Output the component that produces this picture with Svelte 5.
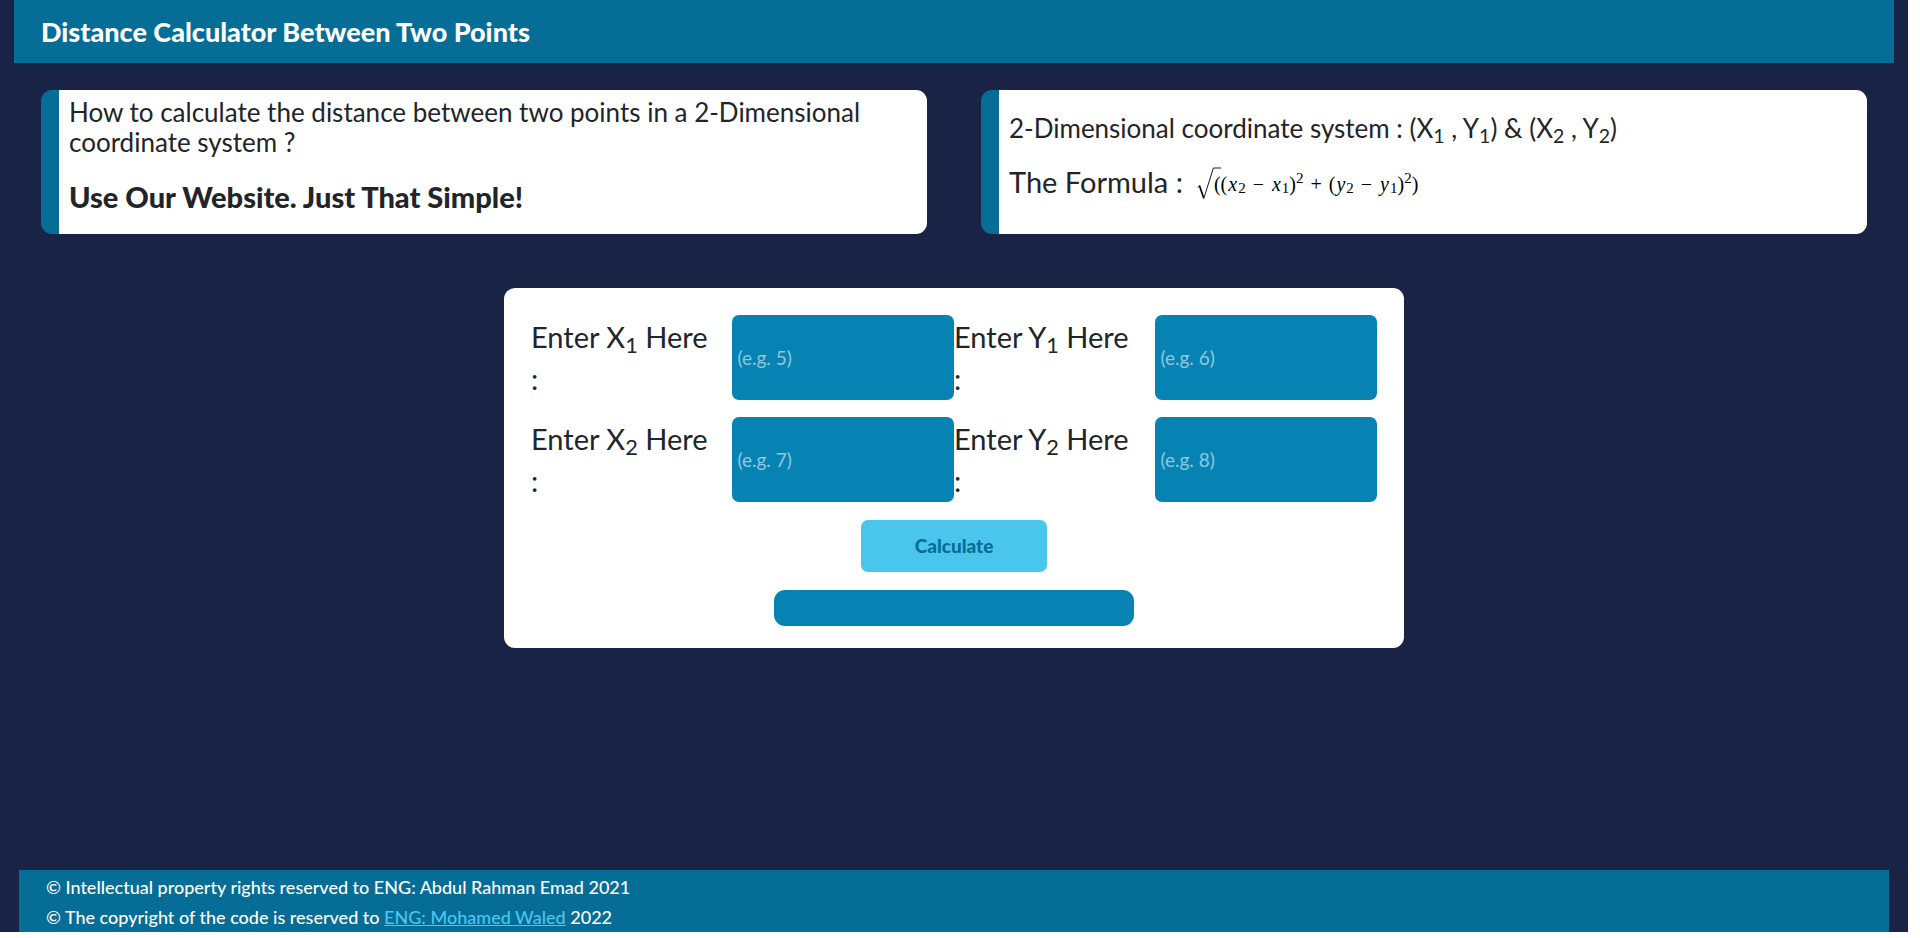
<script>
  let x1 = $state('');
  let y1 = $state('');
  let x2 = $state('');
  let y2 = $state('');
  let result = $state('');

  function calculate(event) {
    event.preventDefault();
    const values = [x1, y1, x2, y2];
    if (values.some((value) => value === '' || Number.isNaN(Number(value)))) {
      result = '';
      return;
    }
    result = Math.hypot(x2 - x1, y2 - y1).toFixed(4);
  }
</script>

<div class="page">
  <header>
    <h1>Distance Calculator Between Two Points</h1>
  </header>

  <main>
    <section class="cards">
      <article class="card">
        <p class="question">
          How to calculate the distance between two points in a 2-Dimensional coordinate system ?
        </p>
        <p class="answer">Use Our Website. Just That Simple!</p>
      </article>
      <article class="card system">
        <p class="points">
          2-Dimensional coordinate system : (X<sub>1</sub> , Y<sub>1</sub>) &amp; (X<sub>2</sub> , Y<sub>2</sub>)
        </p>
        <p class="formula">
          The Formula :
          <span class="math">
            <svg width="24" height="34" viewBox="0 0 24 34" aria-hidden="true">
              <path d="M.5 20.5 3 18.5" fill="none" stroke="#000" stroke-width=".8" />
              <path d="M2.5 18.8 6.5 30.5" fill="none" stroke="#000" stroke-width="1.7" />
              <path d="M6.6 32 16.4 1H24" fill="none" stroke="#000" stroke-width=".9" />
            </svg><span class="under">(</span>(<i>x</i><sub>2</sub><span class="op">−</span><i>x</i><sub>1</sub>)<sup>2</sup><span class="op">+</span>(<i>y</i><sub>2</sub><span class="op">−</span><i>y</i><sub>1</sub>)<sup>2</sup>)
          </span>
        </p>
      </article>
    </section>

    <form onsubmit={calculate}>
      <div class="fields">
        <div class="field">
          <label for="x1">Enter X<sub>1</sub> Here :</label>
          <input id="x1" bind:value={x1} placeholder="(e.g. 5)" inputmode="decimal" />
        </div>
        <div class="field">
          <label for="y1">Enter Y<sub>1</sub> Here :</label>
          <input id="y1" bind:value={y1} placeholder="(e.g. 6)" inputmode="decimal" />
        </div>
        <div class="field">
          <label for="x2">Enter X<sub>2</sub> Here :</label>
          <input id="x2" bind:value={x2} placeholder="(e.g. 7)" inputmode="decimal" />
        </div>
        <div class="field">
          <label for="y2">Enter Y<sub>2</sub> Here :</label>
          <input id="y2" bind:value={y2} placeholder="(e.g. 8)" inputmode="decimal" />
        </div>
      </div>
      <button type="submit">Calculate</button>
      <output for="x1 y1 x2 y2">{result}</output>
    </form>
  </main>

  <footer>
    <p>© Intellectual property rights reserved to ENG: Abdul Rahman Emad 2021</p>
    <p>© The copyright of the code is reserved to <a href="#author">ENG: Mohamed Waled</a> 2022</p>
  </footer>
</div>

<style>
  :global(body) {
    margin: 0;
    background: #fff;
  }

  .page {
    box-sizing: border-box;
    display: flex;
    flex-direction: column;
    min-height: calc(100vh - 6px);
    margin-right: 12px;
    background: #192345;
    color: #212529;
    font-family: Lato, 'Open Sans', sans-serif;
  }

  p,
  h1 {
    margin: 0;
  }

  header {
    margin: 0 14px;
    padding: 16px 27px;
    background: #066d96;
    color: #fff;
  }

  h1 {
    font-size: 27px;
    line-height: 31px;
    font-weight: 900;
  }

  main {
    flex: 1;
  }

  .cards {
    display: grid;
    grid-template-columns: 1fr 1fr;
    gap: 54px;
    padding: 27px 41px 54px;
  }

  .card {
    padding: 7px 10px 19px;
    border-left: 18px solid #066d96;
    border-radius: 11px;
    background: #fff;
  }

  .question {
    font-size: 26px;
    line-height: 30px;
  }

  .answer {
    margin-top: 22px;
    font-size: 29px;
    line-height: 36px;
    font-weight: 900;
  }

  .system {
    padding-top: 22px;
  }

  .points {
    font-size: 26px;
    line-height: 32px;
  }

  .formula {
    display: flex;
    align-items: center;
    gap: 14px;
    margin-top: 16px;
    font-size: 29px;
    line-height: 43px;
  }

  sub,
  sup {
    font-size: 75%;
    line-height: 0;
  }

  sub {
    vertical-align: -5px;
  }

  .math {
    display: flex;
    align-items: center;
    padding-top: 4px;
    color: #000;
    font-family: 'Liberation Serif', serif;
    font-size: 20px;
    line-height: 34px;
  }

  .math i {
    padding: 0 1px;
  }

  .math sub,
  .math sup {
    font-size: 15px;
  }

  .math sub {
    padding-top: 8px;
  }

  .math sup {
    padding-bottom: 12px;
  }

  .under {
    margin-left: -7px;
  }

  .op {
    padding: 0 7px;
  }

  form {
    box-sizing: border-box;
    display: flex;
    flex-direction: column;
    align-items: center;
    gap: 18px;
    max-width: 900px;
    margin: 0 auto;
    padding: 27px 27px 22px;
    border-radius: 11px;
    background: #fff;
  }

  .fields {
    display: grid;
    grid-template-columns: 1fr 1fr;
    row-gap: 17px;
    width: 100%;
  }

  .field {
    display: grid;
    grid-template-columns: 10fr 11fr;
  }

  label {
    padding: 1px 18px 0 0;
    font-size: 29px;
    line-height: 42px;
  }

  input {
    box-sizing: border-box;
    width: 100%;
    min-width: 0;
    padding: 0 5px;
    border: 0;
    border-radius: 7px;
    background: #0683b3;
    color: #fff;
    font: 19px Lato, 'Open Sans', sans-serif;
  }

  input::placeholder {
    color: #8fc8de;
    opacity: 1;
  }

  button {
    padding: 0 54px;
    border: 0;
    border-radius: 7px;
    background: #4ac6ed;
    color: #066d96;
    font: 900 19px/52px Lato, 'Open Sans', sans-serif;
    cursor: pointer;
  }

  output {
    width: 360px;
    max-width: 100%;
    min-height: 36px;
    border-radius: 11px;
    background: #0683b3;
    color: #fff;
    font-size: 18px;
    line-height: 36px;
    text-align: center;
  }

  footer {
    padding: 2px 27px 0;
    margin: 0 19px;
    background: #066d96;
    color: #fff;
    font-size: 18px;
    font-weight: 500;
    line-height: 30px;
  }

  a {
    color: #4ac6ed;
  }
</style>
